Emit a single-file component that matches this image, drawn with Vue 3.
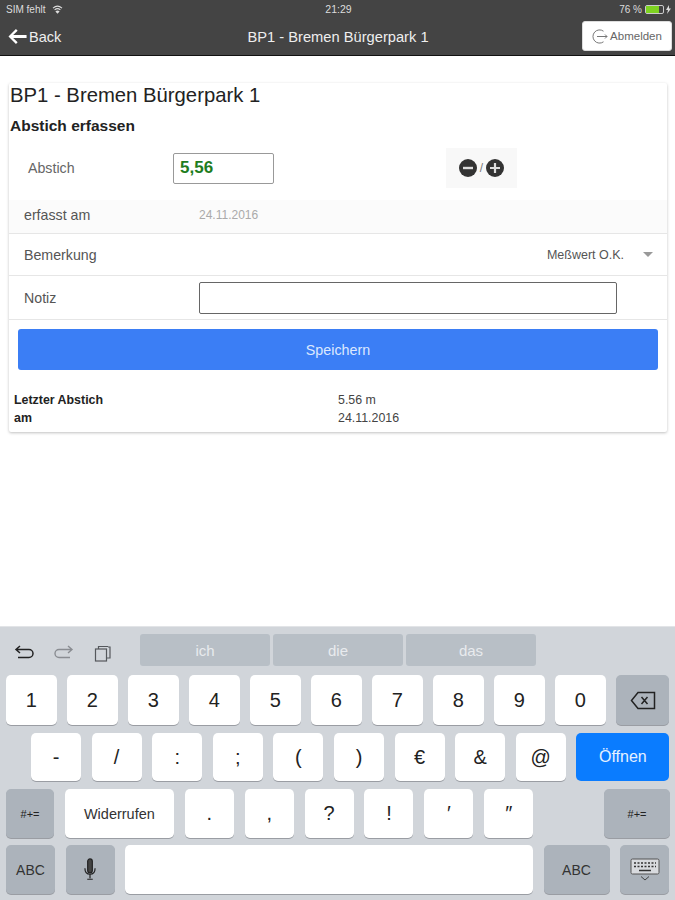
<template>
  <div class="page">
    <header class="top">
      <div class="status">
        <div class="st-left">
          <span>SIM fehlt</span>
          <svg width="11" height="9" viewBox="0 0 12 10" fill="none" stroke="#ddd" stroke-width="1.2">
            <path d="M1 3.5C4 .8 8 .8 11 3.5" />
            <path d="M2.8 5.4c2-1.7 4.4-1.7 6.4 0" />
            <path d="M4.6 7.2c.9-.7 1.9-.7 2.8 0L6 8.8z" fill="#ddd" />
          </svg>
        </div>
        <div class="st-mid">21:29</div>
        <div class="st-right">
          <span>76 %</span>
          <span class="batt"><i></i></span>
          <svg width="5" height="9" viewBox="0 0 5 9"><path d="M3 0 0 5h2l-1 4 4-5.5H3z" fill="#ddd" /></svg>
        </div>
      </div>
      <nav class="nav">
        <div class="back">
          <svg width="20" height="17" viewBox="0 0 18 16" fill="#fff">
            <path d="M8 1 1 8l7 7 1.6-1.6L5.4 9.4H18V6.600H5.400l4.200-4z" />
          </svg>
          <span>Back</span>
        </div>
        <div class="nav-title">BP1 - Bremen Bürgerpark 1</div>
        <button class="logout">
          <svg width="17" height="17" viewBox="0 0 17 17" fill="none" stroke="#777" stroke-width="1">
            <path d="M11.5 3.2A6.600 6.600 0 1 0 11.500 13.800" />
            <path d="M5 8.500h10M13 6.500l2 2-2 2" />
          </svg>
          <span>Abmelden</span>
        </button>
      </nav>
    </header>

    <main class="content">
      <section class="card">
        <h1>BP1 - Bremen Bürgerpark 1</h1>
        <h2>Abstich erfassen</h2>

        <div class="row-abstich">
          <label>Abstich</label>
          <input class="num" type="text" value="5,56" />
          <div class="stepper">
            <span class="round">
              <svg width="18" height="18" viewBox="0 0 18 18"><circle cx="9" cy="9" r="9" fill="#333" /><rect x="4" y="7.800" width="10" height="2.400" fill="#ddd" /></svg>
            </span>
            <span class="slash">/</span>
            <span class="round">
              <svg width="18" height="18" viewBox="0 0 18 18"><circle cx="9" cy="9" r="9" fill="#333" /><path d="M4 9h10M9 4v10" stroke="#ddd" stroke-width="2.200" /></svg>
            </span>
          </div>
        </div>

        <div class="row date">
          <span class="lbl">erfasst am</span>
          <span class="date-val">24.11.2016</span>
        </div>
        <div class="row remark">
          <span class="lbl">Bemerkung</span>
          <span class="sel">Meßwert O.K.</span>
          <span class="caret"></span>
        </div>
        <div class="row note">
          <span class="lbl">Notiz</span>
          <input class="note-input" type="text" />
        </div>

        <button class="save">Speichern</button>

        <div class="info">
          <b>Letzter Abstich</b><span>5.56 m</span>
          <b>am</b><span>24.11.2016</span>
        </div>
      </section>
    </main>

    <footer class="kbd">
      <div class="tools">
        <div class="tool-icons">
          <svg width="20" height="18" viewBox="0 0 20 18" fill="none" stroke="#222" stroke-width="1.500">
            <path d="M6 2 2 5.500 6 9M2 5.500h13a3.500 3.500 0 0 1 0 8H4" />
          </svg>
          <svg width="20" height="18" viewBox="0 0 20 18" fill="none" stroke="#8a8d92" stroke-width="1.400">
            <path d="M14 2l4 3.500L14 9M18 5.500H5a3.500 3.500 0 0 0 0 8h11" />
          </svg>
          <svg width="18" height="18" viewBox="0 0 18 18" fill="none" stroke="#55585c" stroke-width="1.200">
            <rect x="1.500" y="5" width="11" height="12" />
            <path d="M4.500 5V2.500h9V3M14 3h2v11h-3.500" />
          </svg>
        </div>
        <div class="suggest">
          <span v-for="s in suggestions" :key="s">{{ s }}</span>
        </div>
      </div>

      <div class="keys r1">
        <button v-for="k in row1" :key="k" class="key">{{ k }}</button>
        <button class="key dark bksp">
          <svg width="26" height="19" viewBox="0 0 26 19" fill="none" stroke="#222" stroke-width="1.500">
            <path d="M8 1.500h16.500v16H8L1.500 9.500z" />
            <path d="M11.500 6l6 7M17.500 6l-6 7" />
          </svg>
        </button>
      </div>

      <div class="keys r2">
        <button v-for="k in row2" :key="k" class="key">{{ k }}</button>
        <button class="key open">Öffnen</button>
      </div>

      <div class="keys r3">
        <button class="key dark sym">#+=</button>
        <button class="key undo">Widerrufen</button>
        <button v-for="k in row3" :key="k" class="key">{{ k }}</button>
        <span class="spring"></span>
        <button class="key dark sym wide">#+=</button>
      </div>

      <div class="keys r4">
        <button class="key dark abc">ABC</button>
        <button class="key dark abc">
          <svg width="14" height="24" viewBox="0 0 14 26" fill="none" stroke="#222" stroke-width="1.300">
            <rect x="4.500" y="1" width="5" height="15" rx="2.500" fill="#444" />
            <path d="M1.500 11c0 4 2 6.500 5.500 6.500s5.500-2.500 5.500-6.500M7 17.500V22M4 23h6" />
          </svg>
        </button>
        <button class="key space"></button>
        <button class="key dark abc wide">ABC</button>
        <button class="key dark abc">
          <svg width="30" height="24" viewBox="0 0 30 24" fill="none">
            <rect x="1" y="1" width="28" height="15" rx="1.500" fill="#d8dade" stroke="#555" />
            <path d="M4 5h22M4 8.500h22" stroke="#333" stroke-width="1.500" stroke-dasharray="2 1.500" />
            <path d="M9 12.500h12" stroke="#333" stroke-width="1.500" />
            <path d="M11 18.500l4 3.500 4-3.500" stroke="#444" />
          </svg>
        </button>
      </div>
    </footer>
  </div>
</template>

<script setup>
const suggestions = ['ich', 'die', 'das']
const row1 = ['1', '2', '3', '4', '5', '6', '7', '8', '9', '0']
const row2 = ['-', '/', ':', ';', '(', ')', '€', '&', '@']
const row3 = ['.', ',', '?', '!', '′', '″']
</script>

<style>
html, body { margin: 0; background: #fff; }
</style>

<style scoped>
.page {
  width: 675px;
  height: 900px;
  display: flex;
  flex-direction: column;
  overflow: hidden;
  font-family: "Liberation Sans", Arial, sans-serif;
  background: #fff;
}
button { font-family: inherit; padding: 0; }

.top {
  height: 55px;
  background: #444;
  border-bottom: 1px solid #111;
  color: #fff;
  flex: none;
}
.status {
  height: 18px;
  display: grid;
  grid-template-columns: 1fr auto 1fr;
  align-items: center;
  padding: 0 4px 0 6px;
  font-size: 10px;
  color: #ddd;
}
.st-left { display: flex; align-items: center; gap: 7px; }
.st-mid { font-size: 10.5px; }
.st-right { display: flex; align-items: center; justify-content: flex-end; gap: 2px; }
.batt {
  width: 17px;
  height: 7px;
  border: 1px solid #ccc;
  border-radius: 2px;
  display: block;
  margin-left: 1px;
}
.batt i { display: block; width: 13px; height: 7px; background: #7ed321; }
.nav {
  height: 37px;
  position: relative;
  display: flex;
  align-items: center;
  justify-content: space-between;
  padding: 0 3px 0 7px;
}
.back { display: flex; align-items: center; gap: 2px; font-size: 14.5px; color: #eee; }
.nav-title {
  position: absolute;
  left: 1px;
  right: 0;
  top: 11px;
  text-align: center;
  font-size: 14.7px;
  color: #eee;
}
.logout {
  width: 90px;
  height: 30px;
  margin-top: -1px;
  background: #fff;
  border: 1px solid #ddd;
  border-radius: 3px;
  display: flex;
  align-items: center;
  justify-content: center;
  gap: 1px;
  font-size: 11.5px;
  color: #666;
}

.content { flex: 1; padding: 27px 8px 0 9px; }
.card {
  height: 349px;
  box-sizing: border-box;
  background: #fff;
  box-shadow: 0 1px 3px rgba(0, 0, 0, .25);
  border-radius: 2px;
}
h1 {
  margin: 0;
  padding: 0 0 0 1px;
  font-size: 20.3px;
  font-weight: 400;
  line-height: 24px;
  color: #222;
}
h2 {
  margin: 0;
  padding: 10px 0 0 1px;
  font-size: 15.5px;
  font-weight: 700;
  line-height: 17px;
  color: #222;
}
.row-abstich {
  height: 66px;
  padding: 2px 0 0 19px;
  display: flex;
  align-items: center;
  font-size: 14.2px;
  color: #666;
  box-sizing: border-box;
}
.row-abstich label { width: 145px; }
.num {
  width: 101px;
  height: 31px;
  box-sizing: border-box;
  border: 1px solid #999;
  border-radius: 2px;
  padding: 0 6px;
  font: 700 17px "Liberation Sans", Arial, sans-serif;
  color: #1e7d1e;
  outline: none;
}
.stepper {
  width: 71px;
  height: 40px;
  margin-left: 172px;
  background: #f8f8f8;
  display: flex;
  align-items: center;
  justify-content: center;
  gap: 3px;
}
.round { display: flex; }
.slash { font-size: 12px; color: #777; }
.row {
  display: flex;
  align-items: center;
  padding-left: 15px;
  box-sizing: border-box;
  font-size: 14.2px;
  color: #555;
  border-bottom: 1px solid #e6e6e6;
}
.date { height: 34px; padding-bottom: 4px; background: #fbfbfb; }
.lbl { width: 175px; }
.date-val { font-size: 12px; color: #aaa; }
.remark { height: 42px; }
.sel { margin-left: auto; font-size: 12.5px; color: #555; }
.caret {
  width: 0;
  height: 0;
  margin: 0 14px 0 19px;
  border-left: 5px solid transparent;
  border-right: 5px solid transparent;
  border-top: 5px solid #999;
}
.note { height: 44px; }
.note-input {
  width: 418px;
  height: 32px;
  box-sizing: border-box;
  border: 1px solid #666;
  border-radius: 2px;
  outline: none;
}
.save {
  display: block;
  width: 640px;
  height: 41px;
  margin: 9px 0 0 9px;
  background: #3b7ef5;
  border: 0;
  border-radius: 3px;
  color: #dbe8ff;
  font-size: 14.3px;
}
.info {
  display: grid;
  grid-template-columns: 324px 1fr;
  padding: 21px 0 0 5px;
  font-size: 12.4px;
  line-height: 18px;
  color: #444;
}
.info b { color: #222; }

.kbd {
  height: 274px;
  flex: none;
  box-sizing: border-box;
  background: #d1d5da;
  border-top: 1px solid #e2e4e7;
  padding: 7px 5px 0 6px;
}
.tools { display: flex; height: 32px; margin-bottom: 9px; }
.tool-icons {
  width: 134px;
  display: flex;
  align-items: center;
  gap: 20px;
  padding: 5px 0 0 8px;
  box-sizing: border-box;
}
.suggest { display: flex; gap: 3px; }
.suggest span {
  width: 130px;
  border-radius: 3px;
  background: #b8bfc6;
  color: #e8ebee;
  font-size: 15px;
  display: flex;
  align-items: center;
  justify-content: center;
}
.keys { display: flex; gap: 10.5px; margin-bottom: 8px; }
.key {
  width: 50.5px;
  height: 50px;
  flex: none;
  border: 0;
  border-radius: 5px;
  background: #fff;
  box-shadow: 0 1px 0 #9a9da3;
  font-size: 20px;
  color: #222;
  display: flex;
  align-items: center;
  justify-content: center;
}
.dark { background: #acb3bb; }
.r1 { height: 50px; }
.r1 .bksp { width: 53px; background: #acb3bb; }
.r2 { padding-left: 25px; height: 48px; gap: 10.6px; }
.r2 .key { width: 50px; height: 48px; }
.r2 .open { width: 93px; background: #0a7cff; color: #e6f1ff; font-size: 16px; box-shadow: none; }
.r3 { height: 49px; gap: 10.9px; }
.r3 .key { width: 49px; height: 49px; }
.r3 .sym { width: 48px; font-size: 11px; }
.r3 .undo { width: 109px; font-size: 14.5px; color: #333; }
.r3 .wide { width: 66px; }
.spring { flex: 1; }
.r4 { height: 49px; margin-bottom: 0; margin-top: -1px; }
.r4 .key { width: 49px; height: 49px; }
.r4 .abc { font-size: 14px; color: #333; }
.r4 .space { width: 408px; }
.r4 .wide { width: 66px; }
</style>
